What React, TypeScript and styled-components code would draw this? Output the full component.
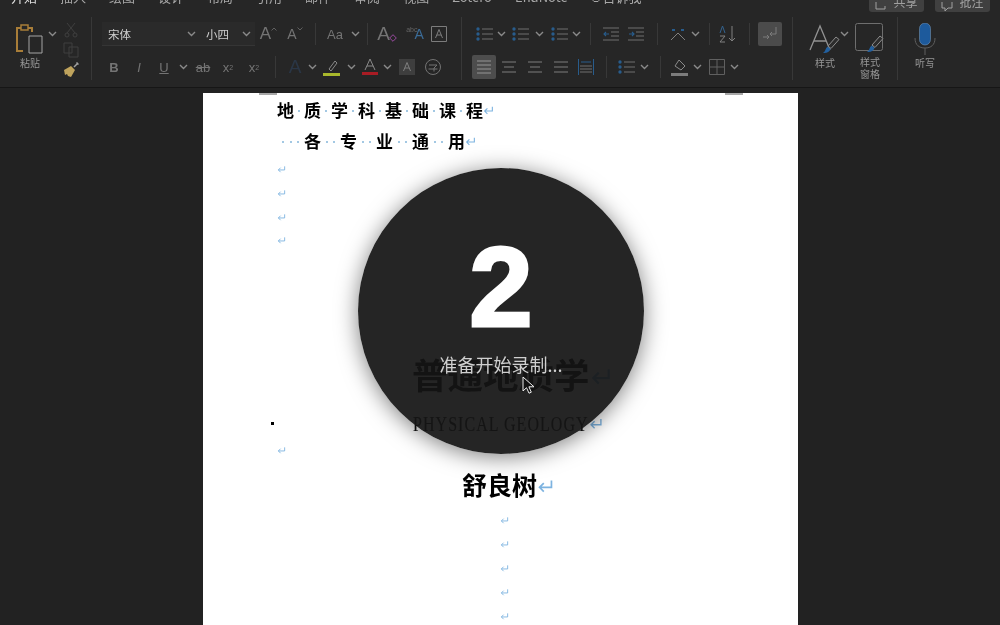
import React from 'react';
import styled, { createGlobalStyle } from 'styled-components';

const Global = createGlobalStyle`
  html, body { margin: 0; padding: 0; background: #222; }
  body { font-family: "Noto Sans CJK SC", "Liberation Sans", sans-serif; }
`;

const Screen = styled.div`
  width: 1000px;
  height: 625px;
  overflow: hidden;
  background: #222;
  filter: blur(0.6px);
`;

const Ribbon = styled.header`
  height: 87px;
  background: #262626;
  border-bottom: 1px solid #161616;
`;

const TabStrip = styled.nav`
  height: 17px;
  display: flex;
  padding-left: 11px;
  gap: 23px;
  color: #a8a8a8;
  font-size: 13px;
`;

const Tab = styled.div<{ $active?: boolean }>`
  display: flex;
  flex-direction: column;
  height: 12px;
  line-height: 14px;
  margin-top: -10px;
  color: ${p => (p.$active ? '#e0e0e0' : '#a8a8a8')};
  &::after {
    content: '';
    height: 2.5px;
    margin-top: 5px;
    border-radius: 1px;
    background: ${p => (p.$active ? '#ededed' : 'transparent')};
  }
`;

const TellMe = styled.div`
  display: flex;
  gap: 2px;
  height: 14px;
  margin-top: -10px;
  line-height: 14px;
  align-items: flex-end;
  svg { margin-bottom: -2px; }
`;

const TopActions = styled.div`
  margin-left: auto;
  padding-right: 10px;
  display: flex;
  gap: 11px;
`;

const TopButton = styled.div`
  width: 55px;
  height: 12px;
  background: #404040;
  border-radius: 0 0 3px 3px;
  display: flex;
  justify-content: center;
  align-items: flex-end;
  gap: 6px;
  overflow: hidden;
  font-size: 12px;
  line-height: 14px;
  color: #a0a0a0;
  span { margin-bottom: 3px; }
`;

const Groups = styled.div`
  display: flex;
  height: 63px;
`;

const Group = styled.section<{ $w: number; $pad?: number; $noLine?: boolean }>`
  box-sizing: border-box;
  width: ${p => p.$w}px;
  padding: 5px 0 0 ${p => p.$pad ?? 0}px;
  border-right: ${p => (p.$noLine ? 'none' : '1px solid #383838')};
  display: flex;
  flex-direction: column;
  gap: 9px;
`;

const Row = styled.div`
  display: flex;
  align-items: center;
  height: 24px;
`;

const Slot = styled.div<{ $w: number; $on?: boolean; $color?: string; $size?: number; $weight?: number }>`
  width: ${p => p.$w}px;
  height: 24px;
  flex: none;
  display: flex;
  align-items: center;
  justify-content: center;
  color: ${p => p.$color ?? '#747474'};
  background: ${p => (p.$on ? '#4d4d4d' : 'transparent')};
  border-radius: 2px;
  font-family: "Liberation Sans", sans-serif;
  font-size: ${p => p.$size ?? 13}px;
  font-weight: ${p => p.$weight ?? 400};
  white-space: nowrap;
  & > * { flex: none; }
`;

const Divider = styled.div<{ $w: number }>`
  width: ${p => p.$w}px;
  height: 22px;
  flex: none;
  display: flex;
  justify-content: center;
  &::after { content: ''; width: 1px; background: #383838; }
`;

const Select = styled.div<{ $w: number }>`
  box-sizing: border-box;
  width: ${p => p.$w}px;
  height: 24px;
  flex: none;
  padding: 0 4px 0 6px;
  display: flex;
  align-items: center;
  justify-content: space-between;
  background: #2a2a2a;
  border-bottom: 1px solid #353535;
  color: #cfcfcf;
  font-size: 11.5px;
`;

const BigTool = styled.div<{ $w: number; $gap?: number }>`
  width: ${p => p.$w}px;
  margin-left: ${p => p.$gap ?? 0}px;
  flex: none;
  display: flex;
  flex-direction: column;
  align-items: center;
  color: #969696;
  font-size: 10px;
  line-height: 12px;
  text-align: center;
`;

const BigIcon = styled.div`
  height: 33px;
  margin-bottom: 2px;
  display: flex;
  align-items: center;
  justify-content: center;
`;

const PasteArea = styled.div`
  display: flex;
  padding: 0 0 0 15px;
  height: 100%;
`;

const SmallStack = styled.div`
  width: 20px;
  margin-left: 2px;
  display: flex;
  flex-direction: column;
  align-items: center;
  gap: 4px;
`;

const ToolLine = styled.div`
  display: flex;
  height: 100%;
`;

const TinyLabel = styled.span`
  font-size: 7px;
  margin: -9px -3px 0 0;
  color: #666;
`;

const Workspace = styled.main`
  height: 537px;
  padding: 5px 0 0 203px;
  box-sizing: border-box;
  overflow: hidden;
`;

const Page = styled.article`
  position: relative;
  width: 595px;
  height: 600px;
  background: #fff;
  color: #000;
  padding-top: 2px;
  box-sizing: border-box;
`;

const Handle = styled.i<{ $x: number }>`
  position: absolute;
  top: 0;
  left: ${p => p.$x}px;
  width: 18px;
  height: 2px;
  background: #a8a8a8;
`;

const Line = styled.div<{ $h: number; $pad?: number; $after?: number; $before?: number }>`
  height: ${p => p.$h}px;
  margin: ${p => p.$before ?? 0}px 0 ${p => p.$after ?? 0}px;
  padding-left: ${p => p.$pad ?? 74}px;
  display: flex;
  align-items: center;
`;

const Han = styled.span<{ $size: number }>`
  font-size: ${p => p.$size}px;
  font-weight: 700;
  line-height: 1;
  flex: none;
  margin-bottom: 0.16em;
`;

const Dots = styled.span<{ $w: number }>`
  width: ${p => p.$w}px;
  flex: none;
  display: flex;
  justify-content: space-evenly;
  align-items: center;
  i { width: 2px; height: 2px; border-radius: 50%; background: #85b6da; }
`;

const Latin = styled.span`
  display: inline-block;
  font-family: "Liberation Serif", serif;
  font-size: 20px;
  letter-spacing: 1.3px;
  line-height: 1;
  white-space: nowrap;
  color: #111;
  -webkit-text-stroke: 0.2px #111;
  transform: scaleX(0.8);
  transform-origin: left center;
  margin-right: -44px;
`;

const Bullet = styled.i`
  position: absolute;
  left: 68px;
  top: 329px;
  width: 3px;
  height: 3px;
  background: #000;
`;

const Countdown = styled.div`
  position: absolute;
  left: 155px;
  top: 75px;
  width: 286px;
  height: 286px;
  border-radius: 50%;
  background: rgba(20, 20, 20, 0.93);
  box-shadow: 0 3px 22px rgba(0, 0, 0, 0.5);
  display: flex;
  flex-direction: column;
  align-items: center;
`;

const Digit = styled.div`
  margin-top: 54px;
  height: 130px;
  font-family: "Liberation Sans", sans-serif;
  font-size: 114px;
  font-weight: 700;
  line-height: 130px;
  color: #fff;
  -webkit-text-stroke: 3px #fff;
`;

const Caption = styled.div`
  font-size: 18px;
  line-height: 24px;
  color: #cfcfcf;
  white-space: nowrap;
`;

const Pointer = styled.svg`
  position: absolute;
  left: 164px;
  top: 208px;
`;

const Ico = styled.svg.attrs({ fill: 'none', stroke: 'currentColor', strokeWidth: 1 })``;

const Chev = () => (
  <svg width="9" height="6" viewBox="0 0 9 6" fill="none" stroke="#8a8a8a" strokeWidth="1.4"><path d="M1 1l3.5 3.5L8 1" /></svg>
);

const Ret = ({ size = 9 }: { size?: number }) => (
  <svg width={size} height={size} viewBox="0 0 10 10" fill="none" stroke="#7db3e0" strokeWidth="1"><path d="M8.5 1.5v4H1.5M4 3L1.5 5.5 4 8" /></svg>
);

const Caret = ({ down }: { down?: boolean }) => (
  <svg width="6" height="4" viewBox="0 0 6 4" fill="none" stroke="#5f5f5f" style={{ marginTop: -10 }}>
    <path d={down ? 'M.5.5L3 3l2.500-2.500' : 'M.5 3.500L3 1l2.500 2.500'} />
  </svg>
);

const Lines = ({ w = 16, rows = [3, 8, 13], inset = [0, 0, 0], color = '#6f6f6f' }: { w?: number; rows?: number[]; inset?: number[]; color?: string }) => (
  <svg width={w} height="16" viewBox={`0 0 ${w} 16`} stroke={color} strokeWidth="1.2">
    {rows.map((y, i) => <path key={y} d={`M${inset[i] ?? 0} ${y}H${w - (inset[i] ?? 0)}`} />)}
  </svg>
);

const ListIcon = () => (
  <svg width="17" height="16" viewBox="0 0 17 16" stroke="#6f6f6f" strokeWidth="1.2">
    <path d="M6 3h11M6 8h11M6 13h11" />
    <g fill="#285c8c" stroke="none"><circle cx="2" cy="3" r="1.7" /><circle cx="2" cy="8" r="1.7" /><circle cx="2" cy="13" r="1.7" /></g>
  </svg>
);

const IndentIcon = ({ flip }: { flip?: boolean }) => (
  <svg width="16" height="14" viewBox="0 0 16 14" stroke="#6f6f6f" strokeWidth="1.1" fill="none">
    <path d="M0 1h16M8 5h8M8 9h8M0 13h16" />
    <path d={flip ? 'M1 7h5M4 5l2 2-2 2' : 'M6 7H1M3 5L1 7l2 2'} stroke="#285c8c" />
  </svg>
);

const Brush = ({ x = 0, y = 0 }: { x?: number; y?: number }) => (
  <g transform={`translate(${x} ${y})`}>
    <path d="M13 0l3 2.5-8 9-3-2.5z" fill="#2c2c2c" stroke="#8e8e8e" strokeWidth="1" />
    <path d="M4.5 9.5l3 2.5c-1 3-4 4.500-7.500 4 2.500-1.500 2-4 4.500-6.500z" fill="#22609f" />
  </g>
);

const LINE_ONE = ['地', '质', '学', '科', '基', '础', '课'];
const LINE_TWO = ['各', '专', '业', '通'];

export default function App() {
  return (
    <>
      <Global />
      <Screen>
        <Ribbon>
          <TabStrip>
            <Tab $active>开始</Tab>
            <Tab>插入</Tab>
            <Tab>绘图</Tab>
            <Tab>设计</Tab>
            <Tab>布局</Tab>
            <Tab>引用</Tab>
            <Tab>邮件</Tab>
            <Tab>审阅</Tab>
            <Tab>视图</Tab>
            <Tab>Zotero</Tab>
            <Tab>EndNote</Tab>
            <TellMe>
              <Ico width="10" height="11" viewBox="0 2 10 11"><path d="M3 8.500h4M2 2.500c-2 2-1 4 1 6h4c2-2 3-4 1-6" /></Ico>
              <span>告诉我</span>
            </TellMe>
            <TopActions>
              <TopButton>
                <Ico width="12" height="10" viewBox="0 0 12 10"><path d="M1 0v7h9V4" /></Ico>
                <span>共享</span>
              </TopButton>
              <TopButton>
                <Ico width="12" height="10" viewBox="0 0 12 10"><path d="M1 0v6h3v3l3-3h4V0" /></Ico>
                <span>批注</span>
              </TopButton>
            </TopActions>
          </TabStrip>

          <Groups>
            <Group $w={92}>
              <PasteArea>
                <BigTool $w={30}>
                  <BigIcon>
                    <svg width="30" height="30" viewBox="0 0 30 30" fill="none">
                      <path d="M8 4H2v23h6" stroke="#a87d38" strokeWidth="2" />
                      <path d="M17 8V4h-5" stroke="#a87d38" strokeWidth="2" />
                      <path d="M6 1h7v5H6z" stroke="#a87d38" strokeWidth="1.500" fill="#262626" />
                      <path d="M14 12h13v17H14z" stroke="#a4a4a4" strokeWidth="1" fill="#262626" />
                    </svg>
                  </BigIcon>
                  粘贴
                </BigTool>
                <Slot $w={14}><Chev /></Slot>
                <SmallStack>
                  <Ico width="14" height="16" viewBox="0 0 14 16" color="#3f3f3f"><path d="M3 1l8 10M11 1L3 11" /><circle cx="3" cy="13" r="2" /><circle cx="11" cy="13" r="2" /></Ico>
                  <Ico width="16" height="16" viewBox="0 0 16 16" color="#3f3f3f"><path d="M1 1h8v10H1zM6 5h9v10H6z" /></Ico>
                  <svg width="16" height="16" viewBox="0 0 16 16" fill="none">
                    <path d="M15 1l-4 4M13.500.5l2 2" stroke="#a0a0a0" strokeWidth="1.500" />
                    <path d="M1 8l7-4 4 4-4 7-3-1-1-2-2 1z" fill="#bfa35c" />
                  </svg>
                </SmallStack>
              </PasteArea>
            </Group>

            <Group $w={370} $pad={10}>
              <Row>
                <Select $w={98}>宋体<Chev /></Select>
                <Select $w={55}>小四<Chev /></Select>
                <Slot $w={27} $size={17}>A<Caret /></Slot>
                <Slot $w={26} $size={14}>A<Caret down /></Slot>
                <Divider $w={14} />
                <Slot $w={26}>Aa</Slot>
                <Slot $w={14}><Chev /></Slot>
                <Divider $w={10} />
                <Slot $w={26} $size={19}>
                  A
                  <svg width="8" height="8" viewBox="0 0 8 8" fill="none" stroke="#9a4aa0" style={{ margin: '8px -4px 0 -1px' }}><path d="M4 .7L7.300 4 4 7.300.7 4z" /></svg>
                </Slot>
                <Slot $w={34} $color="#3b6c98" $size={14}><TinyLabel>abc</TinyLabel>A</Slot>
                <Slot $w={14}>
                  <svg width="16" height="16" viewBox="0 0 16 16" fill="none" stroke="#7c7c7c"><path d="M.5.5h15v15H.5zM4.500 12L8 3.500 11.500 12M6 9h4" /></svg>
                </Slot>
              </Row>
              <Row>
                <Slot $w={24} $weight={700}>B</Slot>
                <Slot $w={26} style={{ fontStyle: 'italic' }}>I</Slot>
                <Slot $w={24} style={{ textDecoration: 'underline' }}>U</Slot>
                <Slot $w={14}><Chev /></Slot>
                <Slot $w={26} style={{ textDecoration: 'line-through' }}>ab</Slot>
                <Slot $w={24}>x<sub style={{ fontSize: 7 }}>2</sub></Slot>
                <Slot $w={28}>x<sup style={{ fontSize: 7 }}>2</sup></Slot>
                <Divider $w={14} />
                <Slot $w={26} $color="#2a3646" $size={19}>A</Slot>
                <Slot $w={8}><Chev /></Slot>
                <Slot $w={31}>
                  <svg width="17" height="17" viewBox="0 0 17 17" fill="none"><path d="M6 10l6-8 2 2-6 8z" stroke="#8a8a8a" /><path d="M0 14h17v3H0z" fill="#a9b82c" /></svg>
                </Slot>
                <Slot $w={8}><Chev /></Slot>
                <Slot $w={30}>
                  <svg width="16" height="18" viewBox="0 0 16 18" fill="none"><path d="M3 12L8 1l5 11M5 8h6" stroke="#8a8a8a" /><path d="M0 14h16v3H0z" fill="#a81c24" /></svg>
                </Slot>
                <Slot $w={4}><Chev /></Slot>
                <Slot $w={36}>
                  <svg width="16" height="16" viewBox="0 0 16 16" fill="none"><path d="M0 0h16v16H0z" fill="#3e3e3e" /><path d="M4.500 12L8 3.500 11.500 12M6 9h4" stroke="#7f7f7f" /></svg>
                </Slot>
                <Slot $w={16}>
                  <svg width="16" height="16" viewBox="0 0 16 16" fill="none" stroke="#747474"><circle cx="8" cy="8" r="7.500" /><path d="M4 6h8l-3 3v3.500M3.500 10h9" /></svg>
                </Slot>
              </Row>
            </Group>

            <Group $w={331} $pad={10}>
              <Row>
                <Slot $w={24}><ListIcon /></Slot>
                <Slot $w={10}><Chev /></Slot>
                <Slot $w={28}><ListIcon /></Slot>
                <Slot $w={10}><Chev /></Slot>
                <Slot $w={30}><ListIcon /></Slot>
                <Slot $w={4}><Chev /></Slot>
                <Divider $w={24} />
                <Slot $w={18}><IndentIcon /></Slot>
                <Slot $w={32}><IndentIcon flip /></Slot>
                <Divider $w={10} />
                <Slot $w={32}>
                  <svg width="18" height="14" viewBox="0 0 18 14" fill="none" stroke="#808080"><path d="M2 13L9 6l7 7" /><path d="M3 3h3M12 3h3" stroke="#285c8c" strokeWidth="2" /></svg>
                </Slot>
                <Slot $w={2}><Chev /></Slot>
                <Divider $w={26} />
                <Slot $w={12}>
                  <svg width="18" height="18" viewBox="0 0 18 18" fill="none" stroke="#808080"><path d="M1 8l2.500-7L6 8" stroke="#33638f" /><path d="M1 11h5l-5 6h5M13 1v15M10 13l3 3 3-3" /></svg>
                </Slot>
                <Divider $w={30} />
                <Slot $w={12}>
                  <svg width="24" height="24" viewBox="0 0 24 24" fill="none" stroke="#7c7c7c"><rect width="24" height="24" rx="2" fill="#4b4b4b" stroke="none" /><path d="M18 5v7h-6M14 10l-2 2 2 2M5 15h6M9 13l2 2-2 2" /></svg>
                </Slot>
              </Row>
              <Row>
                <Slot $w={24} $on><Lines w={14} rows={[2, 6, 10, 14]} inset={[0]} color="#8a8a8a" /></Slot>
                <Slot $w={26}><Lines w={14} inset={[0, 2, 0]} /></Slot>
                <Slot $w={26}><Lines w={14} inset={[0, 2, 0]} /></Slot>
                <Slot $w={26}><Lines w={14} /></Slot>
                <Slot $w={24}>
                  <svg width="16" height="16" viewBox="0 0 16 16" fill="none" stroke="#6f6f6f"><path d="M2 7h12M2 10h12M2 13h12" /><path d="M.5 0v16M15.500 0v16M3 3h10" stroke="#285c8c" /></svg>
                </Slot>
                <Divider $w={16} />
                <Slot $w={25}><ListIcon /></Slot>
                <Slot $w={10}><Chev /></Slot>
                <Divider $w={22} />
                <Slot $w={16}>
                  <svg width="17" height="17" viewBox="0 0 17 17" fill="none" stroke="#8a8a8a"><path d="M8 1l6 6-4 4-6-4z" /><path d="M0 14h17v3H0z" fill="#7c7c7c" stroke="none" /></svg>
                </Slot>
                <Slot $w={20}><Chev /></Slot>
                <Slot $w={20}>
                  <svg width="16" height="16" viewBox="0 0 16 16" fill="none" stroke="#606060"><path d="M.5.5h15v15H.5zM8 .5v15M.5 8h15" /></svg>
                </Slot>
                <Slot $w={14}><Chev /></Slot>
              </Row>
            </Group>

            <Group $w={105} $pad={13}>
              <ToolLine>
                <BigTool $w={38}>
                  <BigIcon>
                    <svg width="32" height="30" viewBox="0 0 32 30" fill="none">
                      <path d="M1 26L11 2l10 24M5 17h12" stroke="#929292" strokeWidth="1.300" />
                      <Brush x={14} y={13} />
                    </svg>
                  </BigIcon>
                  样式
                </BigTool>
                <Slot $w={0}><Chev /></Slot>
                <BigTool $w={28} $gap={12}>
                  <BigIcon>
                    <svg width="30" height="30" viewBox="0 0 30 30" fill="none">
                      <rect x=".5" y=".5" width="27" height="27" rx="2" stroke="#6e6e6e" />
                      <Brush x={12} y={13} />
                    </svg>
                  </BigIcon>
                  样式<br />窗格
                </BigTool>
              </ToolLine>
            </Group>

            <Group $w={102} $noLine $pad={17}>
              <BigTool $w={20}>
                <BigIcon>
                  <svg width="22" height="32" viewBox="0 0 22 32" fill="none">
                    <rect x="5.500" y="0" width="11" height="22" rx="5.500" fill="#1d5a9c" stroke="#7f9fbf" strokeWidth=".5" />
                    <path d="M1 15c0 7 4 10 10 10s10-3 10-10M11 25v7" stroke="#5e5e5e" />
                  </svg>
                </BigIcon>
                听写
              </BigTool>
            </Group>
          </Groups>
        </Ribbon>

        <Workspace>
          <Page>
            <Handle $x={56} />
            <Handle $x={522} />
            <Line $h={31}>
              {LINE_ONE.map(c => (
                <React.Fragment key={c}><Han $size={17}>{c}</Han><Dots $w={10}><i /></Dots></React.Fragment>
              ))}
              <Han $size={17}>程</Han><Ret size={11} />
            </Line>
            <Line $h={31}>
              <Dots $w={27}><i /><i /><i /></Dots>
              {LINE_TWO.map(c => (
                <React.Fragment key={c}><Han $size={17}>{c}</Han><Dots $w={19}><i /><i /></Dots></React.Fragment>
              ))}
              <Han $size={17}>用</Han><Ret size={11} />
            </Line>
            <Line $h={24}><Ret /></Line>
            <Line $h={24}><Ret /></Line>
            <Line $h={24}><Ret /></Line>
            <Line $h={23} $after={98}><Ret /></Line>
            <Line $h={54} $pad={209}><Han $size={35.5}>普通地质学</Han><Ret size={22} /></Line>
            <Line $h={40} $pad={210}><Latin>PHYSICAL GEOLOGY</Latin><Ret size={14} /></Line>
            <Line $h={12}><Ret /></Line>
            <Line $h={44} $pad={259} $before={8}><Han $size={25}>舒良树</Han><Ret size={17} /></Line>
            <Line $h={24} $pad={297}><Ret /></Line>
            <Line $h={24} $pad={297}><Ret /></Line>
            <Line $h={24} $pad={297}><Ret /></Line>
            <Line $h={24} $pad={297}><Ret /></Line>
            <Line $h={24} $pad={297}><Ret /></Line>
            <Bullet />
            <Countdown>
              <Digit>2</Digit>
              <Caption>准备开始录制...</Caption>
              <Pointer width="13" height="18" viewBox="0 0 13 18">
                <path d="M1 1v14l3.500-3.300 2.500 5.500 2.300-1-2.400-5.400H12z" fill="#111" stroke="#eee" strokeWidth="1" />
              </Pointer>
            </Countdown>
          </Page>
        </Workspace>
      </Screen>
    </>
  );
}
